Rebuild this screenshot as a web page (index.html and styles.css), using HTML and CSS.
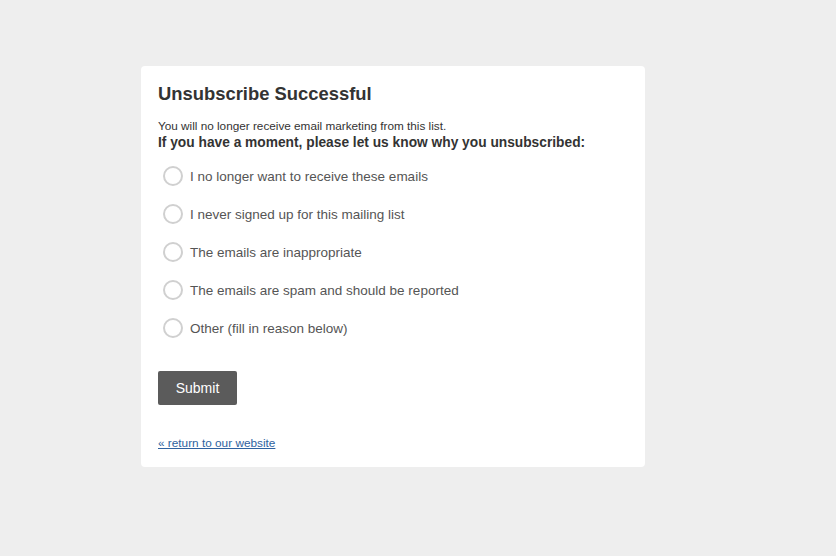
FILE: index.html
```html
<!DOCTYPE html>
<html>
<head>
<meta charset="utf-8">
<link rel="stylesheet" href="styles.css">
</head>
<body>
<div class="page">
  <div class="card">
    <h1 class="title">Unsubscribe Successful</h1>
    <p class="note">You will no longer receive email marketing from this list.</p>
    <p class="question">If you have a moment, please let us know why you unsubscribed:</p>
    <ul class="options">
      <li class="option"><span class="radio"></span><span class="label">I no longer want to receive these emails</span></li>
      <li class="option"><span class="radio"></span><span class="label">I never signed up for this mailing list</span></li>
      <li class="option"><span class="radio"></span><span class="label">The emails are inappropriate</span></li>
      <li class="option"><span class="radio"></span><span class="label">The emails are spam and should be reported</span></li>
      <li class="option"><span class="radio"></span><span class="label">Other (fill in reason below)</span></li>
    </ul>
    <button class="submit" type="button">Submit</button>
    <a class="back" href="#">« return to our website</a>
  </div>
</div>
</body>
</html>
```

FILE: styles.css
```css
html, body {
  margin: 0;
  padding: 0;
  background: #eeeeee;
  font-family: "Liberation Sans", Arial, sans-serif;
  color: #333;
}
.page {
  padding: 66px 0 0 141px;
}
.card {
  box-sizing: border-box;
  width: 504px;
  height: 401px;
  background: #ffffff;
  border-radius: 4px;
  padding: 16px 17px 0 17px;
  display: flex;
  flex-direction: column;
  align-items: flex-start;
}
.title {
  margin: 0;
  font-size: 18.4px;
  line-height: 24px;
  font-weight: bold;
  color: #333;
}
.note {
  margin: 11px 0 0 0;
  font-size: 11.75px;
  line-height: 17px;
  color: #333;
}
.question {
  margin: 0;
  font-size: 13.75px;
  line-height: 18px;
  font-weight: bold;
  color: #333;
}
.options {
  list-style: none;
  margin: 13px 0 0 0;
  padding: 0;
  display: flex;
  flex-direction: column;
  gap: 16px;
}
.option {
  display: flex;
  align-items: center;
  height: 22px;
  padding-left: 5px;
}
.radio {
  box-sizing: border-box;
  width: 20px;
  height: 20px;
  border: 2px solid #d0d0d0;
  border-radius: 50%;
  background: #fff;
  margin-right: 7px;
}
.label {
  font-size: 13.5px;
  color: #555;
}
.submit {
  margin-top: 32px;
  width: 79px;
  height: 34px;
  background: #5b5b5b;
  color: #fff;
  border: none;
  border-radius: 2px;
  font-family: "Liberation Sans", Arial, sans-serif;
  font-size: 14px;
  padding: 0;
}
.back {
  margin-top: 31px;
  font-size: 11.8px;
  color: #2f62a0;
  text-decoration: underline;
}
```
